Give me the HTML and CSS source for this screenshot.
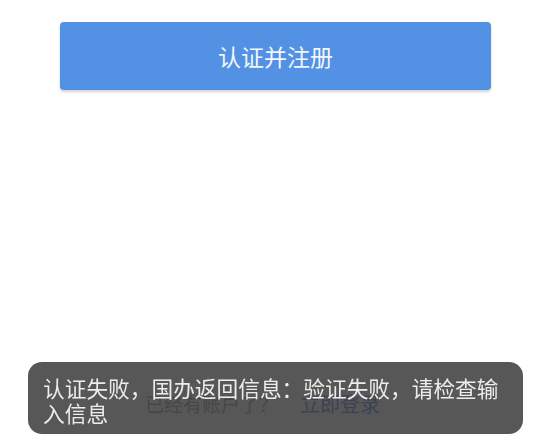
FILE: index.html
```html
<!DOCTYPE html>
<html lang="zh-CN">
<head>
<meta charset="utf-8">
<link rel="stylesheet" href="styles.css">
</head>
<body>
<main class="page">
  <button class="submit">认证并注册</button>
  <div class="login-row">
    <span class="login-hint">已经有账户了？</span>
    <a class="login-link">立即登录</a>
  </div>
</main>
<div class="toast">认证失败，国办返回信息：验证失败，请检查输入信息</div>
</body>
</html>
```
FILE: styles.css
```css
html, body {
  margin: 0;
  padding: 0;
  background: #ffffff;
  font-family: "Noto Sans CJK SC", "Noto Sans", sans-serif;
}
.page {
  display: flex;
  flex-direction: column;
  padding-top: 22px;
}
.submit {
  margin-left: 60px;
  width: 431px;
  height: 68px;
  border: none;
  border-radius: 4px;
  background: #5291e3;
  color: #f3f6fb;
  font-family: inherit;
  font-size: 23px;
  box-shadow: 0 2px 3px rgba(0, 0, 0, 0.18);
  padding: 0;
}
.login-row {
  display: flex;
  align-items: center;
  margin-top: 302px;
  padding-left: 145px;
  gap: 22px;
  font-size: 19px;
  line-height: 24px;
}
.login-hint {
  color: #a0a0a0;
}
.login-link {
  color: #5a90dc;
  font-size: 20px;
}
.toast {
  position: fixed;
  left: 28px;
  top: 362px;
  width: 495px;
  height: 72px;
  box-sizing: border-box;
  padding: 13px 12px 0 15px;
  border-radius: 14px;
  background: rgba(50, 50, 50, 0.82);
  color: #ececec;
  font-size: 21.7px;
  line-height: 25px;
}
```
